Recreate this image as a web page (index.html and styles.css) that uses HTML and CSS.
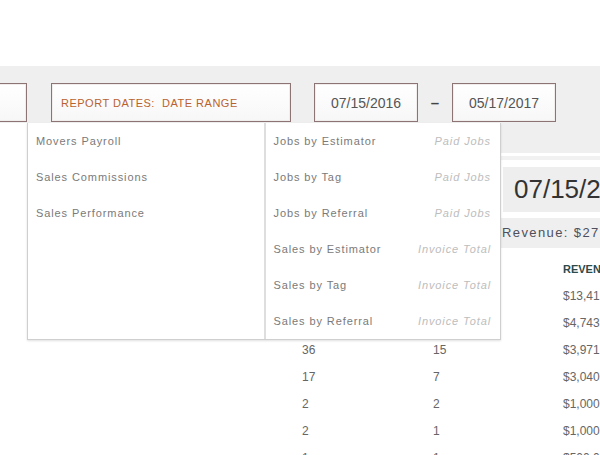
FILE: index.html
```html
<!DOCTYPE html>
<html lang="en">
<head>
    <meta charset="UTF-8">
    <title>Reports</title>
    <link rel="stylesheet" href="styles.css">
</head>
<body>

<div class="masthead"></div>

<!-- date range toolbar -->
<div class="toolbar">
    <div class="field field-cut"></div>
    <div class="field field-range">REPORT DATES:&nbsp; DATE RANGE</div>
    <div class="field field-date">07/15/2016</div>
    <span class="dash">&ndash;</span>
    <div class="field field-date">05/17/2017</div>
</div>

<div class="report">
    <div class="report-bar"></div>
    <div class="report-title">07/15/2016 - 05/17/2017</div>
    <div class="report-summary">Revenue: $27,416.50</div>

    <div class="report-table">
        <div class="th">Jobs</div><div class="th">Paid</div><div class="th">Revenue</div>
        <div>312</div><div>128</div><div>$13,416.00</div>
        <div>98</div><div>41</div><div>$4,743.00</div>
        <div>36</div><div>15</div><div>$3,971.00</div>
        <div>17</div><div>7</div><div>$3,040.00</div>
        <div>2</div><div>2</div><div>$1,000.00</div>
        <div>2</div><div>1</div><div>$1,000.00</div>
        <div>1</div><div>1</div><div>$500.00</div>
    </div>

    <!-- reports menu (open) -->
    <div class="menu">
        <div class="menu-col">
            <div class="menu-item">Movers Payroll</div>
            <div class="menu-item">Sales Commissions</div>
            <div class="menu-item">Sales Performance</div>
        </div>
        <div class="menu-col menu-col-right">
            <div class="menu-item">Jobs by Estimator <span class="hint">Paid Jobs</span></div>
            <div class="menu-item">Jobs by Tag <span class="hint">Paid Jobs</span></div>
            <div class="menu-item">Jobs by Referral <span class="hint">Paid Jobs</span></div>
            <div class="menu-item">Sales by Estimator <span class="hint">Invoice Total</span></div>
            <div class="menu-item">Sales by Tag <span class="hint">Invoice Total</span></div>
            <div class="menu-item">Sales by Referral <span class="hint">Invoice Total</span></div>
        </div>
    </div>
</div>

</body>
</html>
```

FILE: styles.css
```css
html, body {
    overflow: hidden;
}

body {
    margin: 0;
    font-family: 'Liberation Sans', Arial, sans-serif;
    background-color: #fff;
    color: #666;
}

.masthead {
    height: 66px;
}

.toolbar {
    height: 57px;
    box-sizing: border-box;
    padding-top: 17px;
    background-color: #efefef;
    display: flex;
    align-items: flex-start;
}

.field {
    height: 39px;
    box-sizing: border-box;
    border: 1px solid #8c7474;
    background: linear-gradient(#ffffff, #f7f7f7);
    box-shadow: inset 0 0 0 1px #f2eded;
    display: flex;
    align-items: center;
}

.field-cut {
    width: 127px;
    margin-left: -100px;
}

.field-range {
    width: 240px;
    margin-left: 24px;
    padding-left: 9px;
    font-size: 11px;
    letter-spacing: 0.5px;
    color: #b9622f;
}

.field-date {
    width: 104px;
    justify-content: center;
    font-size: 14px;
    color: #555;
}

.field-range + .field-date {
    margin-left: 23px;
}

.dash {
    width: 34px;
    height: 39px;
    line-height: 39px;
    text-align: center;
    font-size: 15px;
    font-weight: bold;
    color: #444;
}

.report {
    position: relative;
}

.report-bar {
    margin-left: 60px;
    height: 30px;
    background-color: #efefef;
    border-bottom: 3px solid #fff;
    box-shadow: 0 4px 0 #f1f1f1;
}

.report-title {
    margin-top: 11px;
    margin-left: 503px;
    height: 45px;
    line-height: 45px;
    padding-left: 11px;
    background-color: #eeeeee;
    font-size: 26px;
    color: #333;
    white-space: nowrap;
}

.report-summary {
    margin-top: 6px;
    margin-left: 60px;
    height: 30px;
    line-height: 30px;
    padding-left: 442px;
    background-color: #efefef;
    font-size: 13px;
    letter-spacing: 1.4px;
    color: #4e4f5c;
    white-space: nowrap;
}

.report-table {
    margin-top: 8px;
    margin-left: 302px;
    display: grid;
    grid-template-columns: 131px 130px 200px;
    grid-auto-rows: 27px;
    font-size: 12px;
    color: #666;
    white-space: nowrap;
}

.report-table div {
    line-height: 27px;
}

.report-table .th {
    font-size: 11px;
    font-weight: bold;
    text-transform: uppercase;
    color: #2c4a4a;
}

.menu {
    position: absolute;
    top: 0;
    left: 27px;
    width: 474px;
    box-sizing: border-box;
    display: flex;
    background-color: #fff;
    border: 1px solid #cfcfcf;
    border-top: none;
    box-shadow: 0 1px 2px rgba(0, 0, 0, 0.12);
}

.menu-col {
    width: 236px;
    box-sizing: border-box;
}

.menu-col-right {
    width: 237px;
    border-left: 2px solid #dedede;
}

.menu-item {
    height: 36px;
    display: flex;
    align-items: center;
    justify-content: space-between;
    padding: 0 9px 0 8px;
    font-size: 11px;
    letter-spacing: 0.9px;
    color: #7a7a7a;
}

.hint {
    font-style: italic;
    color: #bdbdbd;
}
```
